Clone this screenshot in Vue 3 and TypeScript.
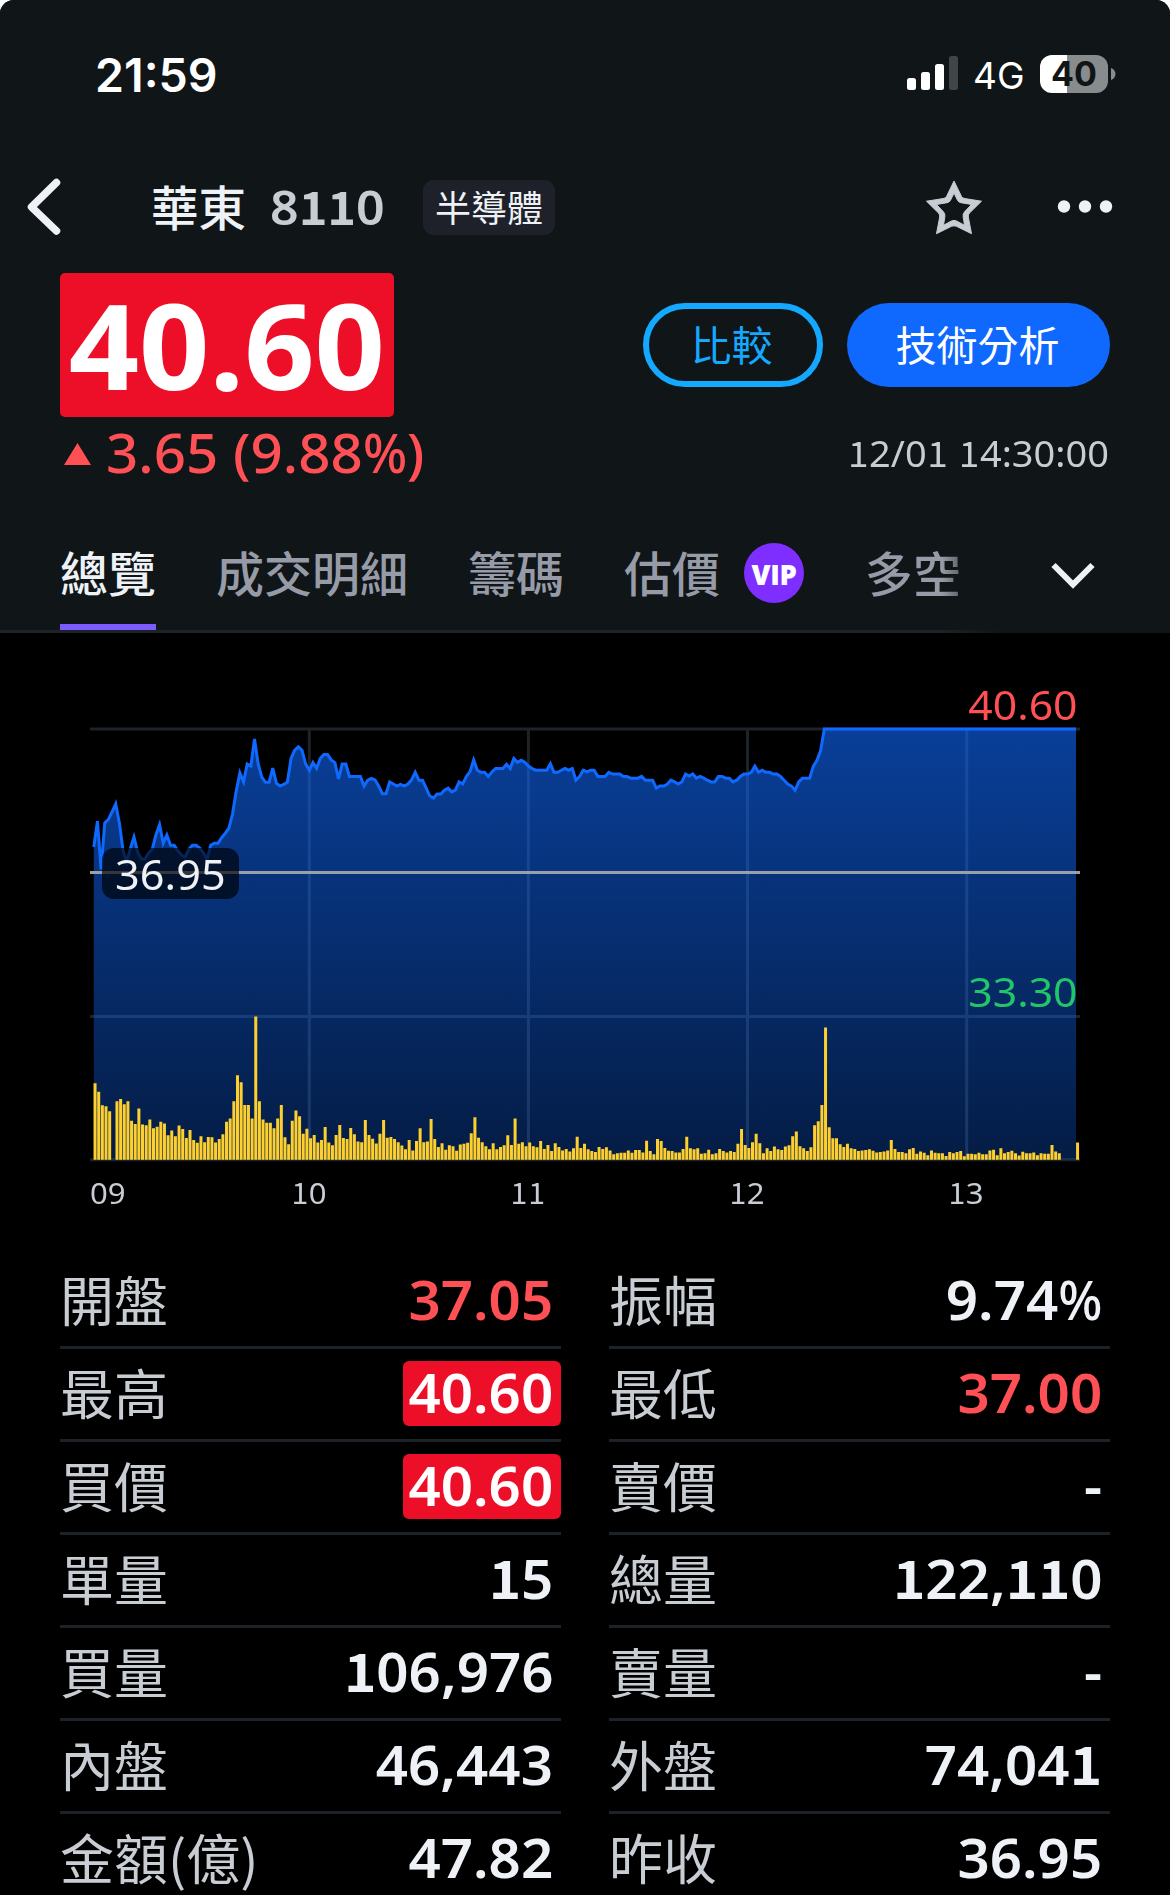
<script setup lang="ts">
import { h, type FunctionalComponent } from 'vue'

interface Quote {
  label: string
  value: string
  tone?: 'up' | 'limit'
}

// Figures use a footed "1", taken from the CJK family, and a narrow percent sign.
const special: Record<string, string> = { '1': 'one', '%': 'pct' }
const Num: FunctionalComponent<{ text: string }> = (props) =>
  h(
    'span',
    { class: 'num' },
    props.text
      .split(/([1%])/)
      .filter(Boolean)
      .map((part) => (special[part] ? h('span', { class: special[part] }, part) : part)),
  )
Num.props = ['text']

const left: Quote[] = [
  { label: '開盤', value: '37.05', tone: 'up' },
  { label: '最高', value: '40.60', tone: 'limit' },
  { label: '買價', value: '40.60', tone: 'limit' },
  { label: '單量', value: '15' },
  { label: '買量', value: '106,976' },
  { label: '內盤', value: '46,443' },
  { label: '金額(億)', value: '47.82' },
]
const right: Quote[] = [
  { label: '振幅', value: '9.74%' },
  { label: '最低', value: '37.00', tone: 'up' },
  { label: '賣價', value: '-' },
  { label: '總量', value: '122,110' },
  { label: '賣量', value: '-' },
  { label: '外盤', value: '74,041' },
  { label: '昨收', value: '36.95' },
]

// One sample per minute from 09:01, in chart units (UNIT per pixel) measured downwards.
const prices: number[] = [
  485, 410, 550, 415, 405, 383, 360, 415, 495, 528, 490, 456, 500, 520, 520, 502, 492, 450, 420, 474,
  450, 480, 480, 496, 508, 514, 492, 480, 480, 488, 502, 520, 480, 474, 474, 458, 445, 430, 388, 322,
  270, 296, 244, 250, 171, 244, 282, 297, 297, 256, 300, 308, 303, 297, 228, 204, 194, 204, 244, 262,
  240, 256, 228, 216, 216, 232, 240, 287, 244, 244, 280, 280, 280, 280, 308, 291, 286, 290, 308, 330,
  330, 296, 302, 308, 303, 308, 302, 290, 268, 291, 291, 314, 337, 343, 331, 331, 320, 314, 325, 320,
  296, 302, 280, 266, 232, 262, 268, 268, 280, 267, 257, 257, 257, 245, 257, 228, 239, 233, 239, 250,
  257, 262, 262, 262, 262, 243, 268, 268, 262, 257, 262, 257, 291, 280, 262, 267, 262, 262, 280, 280,
  280, 268, 273, 273, 273, 280, 280, 285, 285, 285, 280, 291, 291, 291, 314, 308, 308, 303, 291, 296,
  302, 296, 273, 279, 273, 285, 280, 285, 291, 296, 296, 280, 280, 285, 285, 296, 291, 280, 273, 273,
  268, 250, 268, 262, 268, 268, 273, 273, 280, 291, 302, 308, 320, 296, 285, 285, 285, 250, 233, 205,
  142,
]
const volumes: number[] = [
  1171, 1196, 1235, 1238, 1252, 1393, 1223, 1217, 1232, 1223, 1280, 1289, 1244, 1291, 1293, 1276, 1302, 1297, 1283, 1288,
  1322, 1308, 1325, 1294, 1304, 1330, 1307, 1336, 1344, 1325, 1342, 1327, 1328, 1343, 1333, 1319, 1283, 1273, 1223, 1148,
  1168, 1234, 1234, 1273, 977, 1223, 1276, 1286, 1286, 1302, 1273, 1234, 1328, 1348, 1280, 1250, 1267, 1318, 1303, 1331,
  1321, 1343, 1336, 1298, 1343, 1351, 1321, 1292, 1330, 1333, 1301, 1319, 1340, 1342, 1278, 1321, 1332, 1346, 1318, 1278,
  1329, 1327, 1333, 1342, 1352, 1363, 1336, 1366, 1339, 1302, 1342, 1340, 1275, 1333, 1356, 1345, 1364, 1351, 1354, 1367,
  1349, 1347, 1344, 1316, 1270, 1329, 1342, 1354, 1363, 1345, 1363, 1356, 1351, 1322, 1350, 1273, 1347, 1342, 1354, 1343,
  1354, 1357, 1339, 1362, 1350, 1368, 1345, 1356, 1366, 1362, 1369, 1360, 1326, 1359, 1347, 1363, 1368, 1371, 1356, 1362,
  1357, 1366, 1377, 1374, 1373, 1373, 1366, 1373, 1365, 1365, 1372, 1338, 1368, 1377, 1333, 1339, 1359, 1367, 1368, 1372,
  1372, 1362, 1326, 1360, 1363, 1360, 1376, 1374, 1364, 1377, 1374, 1362, 1368, 1372, 1368, 1371, 1347, 1304, 1350, 1359,
  1342, 1318, 1345, 1374, 1360, 1368, 1355, 1363, 1365, 1355, 1351, 1325, 1311, 1354, 1360, 1368, 1357, 1293, 1281, 1234,
  1009, 1299, 1331, 1331, 1348, 1356, 1347, 1360, 1362, 1368, 1366, 1365, 1363, 1367, 1372, 1371, 1369, 1366, 1336, 1362,
  1371, 1371, 1374, 1363, 1359, 1376, 1369, 1373, 1380, 1366, 1373, 1374, 1374, 1382, 1371, 1374, 1371, 1368, 1383, 1376,
  1376, 1377, 1373, 1377, 1377, 1366, 1364, 1380, 1360, 1374, 1371, 1367, 1374, 1381, 1370, 1374, 1374, 1372, 1380, 1374,
  1376, 1376, 1350, 1369, 1374, 1393, 1393, 1393, 1393, 1343,
]

const UNIT = 2.904
const STEP = 3.6525
const TOP = 95.9
const BASE = 526.7
const priceX = (i: number): string => (93.8 + i * STEP).toFixed(2)
const points = prices.map((p, i) => `${priceX(i)},${(p / UNIT + 47).toFixed(2)}`)
const linePath = `M${points.join('L')}L1076,${TOP}`
const areaPath = `${linePath}V${BASE}H93.8Z`
const barPath = volumes
  .map((v, i) => {
    const height = (1393 - v) / UNIT
    return height > 0 ? `M${(93.55 + i * STEP).toFixed(2)},${BASE}v${(-height).toFixed(2)}h3v${height.toFixed(2)}z` : ''
  })
  .join('')
const hours = [309.3, 528.4, 747.5, 966.7]
</script>

<template>
  <div class="screen">
    <header class="top">
      <div class="status">
        <span class="clock">21:59</span>
        <div class="status-right">
          <svg class="signal" width="52" height="36" viewBox="0 0 52 36">
            <rect x="0" y="22" width="9" height="12" rx="2.5" fill="#fff" />
            <rect x="14" y="16" width="9" height="18" rx="2.5" fill="#fff" />
            <rect x="28" y="8" width="9" height="26" rx="2.5" fill="#fff" />
            <rect x="42" y="0" width="9" height="34" rx="2.5" fill="#414548" />
          </svg>
          <span class="net">4G</span>
          <div class="battery"><span>40</span></div>
          <svg class="nub" width="5" height="12" viewBox="0 0 5 12"><path d="M0 0C3 1 4.500 3.500 4.500 6S3 11 0 12Z" fill="#888c8d" /></svg>
        </div>
      </div>

      <div class="nav">
        <svg class="back" width="40" height="64" viewBox="0 0 40 64">
          <path d="M32.500 7.500L7.500 32L32.500 56" fill="none" stroke="#eef2f6" stroke-width="7.500" stroke-linecap="round" stroke-linejoin="round" />
        </svg>
        <span class="name">華東</span>
        <span class="code"><Num text="8110" /></span>
        <span class="sector">半導體</span>
        <svg class="star" width="58" height="60" viewBox="925 177 58 60">
          <path fill-rule="evenodd" fill="#c8ccd3" stroke="#c8ccd3" stroke-width="1" stroke-linejoin="round" d="M954 181L961.500 196.500Q962.500 198.300 965 198.600L981.500 201.200L969.500 213Q968 214.700 968.300 217L971.500 233.700L956.500 226.300Q954 225.300 951.500 226.300L936.500 233.700L939.700 217Q940 214.700 938.500 213L926.500 201.200L943 198.600Q945.500 198.300 946.500 196.500ZM954 193L950.500 200.300Q949.500 202.300 947 202.700L936.500 204.500L943.200 211.500Q945.300 213.500 944.900 216.500L943.500 225.300L951 221.200Q954 219.500 957 221.200L964.500 225.300L963.100 216.500Q962.700 213.500 964.800 211.500L971.500 204.500L961 202.700Q958.500 202.300 957.500 200.300Z" />
        </svg>
        <svg class="more" width="56" height="14" viewBox="0 0 56 14">
          <circle v-for="x in [7, 28, 49]" :key="x" :cx="x" cy="6.500" r="6.200" fill="#eef2f6" />
        </svg>
      </div>

      <div class="summary">
        <div class="quote">
          <div class="price"><Num text="40.60" /></div>
          <div class="change">
            <svg width="27" height="22" viewBox="0 0 27 22"><path d="M13.500 0L27 22H0Z" fill="#ff5155" /></svg>
            <Num text="3.65 (9.88%)" />
          </div>
        </div>
        <div class="side">
          <div class="actions">
            <button class="btn compare">比較</button>
            <button class="btn analyse">技術分析</button>
          </div>
          <div class="time"><Num text="12/01 14:30:00" /></div>
        </div>
      </div>

      <nav class="tabs">
        <span class="tab active">總覽</span>
        <span class="tab">成交明細</span>
        <span class="tab">籌碼</span>
        <span class="tab">估價</span>
        <span class="vip">VIP</span>
        <span class="tab last">多空</span>
        <svg class="chevron" width="44" height="30" viewBox="0 0 44 30">
          <path d="M2.500 4L22 23.500L41.500 4" fill="none" stroke="#eef2f6" stroke-width="6" />
        </svg>
      </nav>
    </header>

    <section class="chart">
      <svg width="1170" height="540" viewBox="0 0 1170 540">
        <defs>
          <linearGradient id="area" x1="0" y1="96" x2="0" y2="527" gradientUnits="userSpaceOnUse">
            <stop offset="0" stop-color="#0f69ff" stop-opacity="0.600" />
            <stop offset="1" stop-color="#0f69ff" stop-opacity="0.270" />
          </linearGradient>
        </defs>
        <g stroke="#1d2328" stroke-width="3">
          <path d="M90 95.900H1080M90 383.400H1080M90 526.700H1080" />
          <path v-for="x in hours" :key="x" :d="`M${x} 96V527`" />
        </g>
        <path :d="areaPath" fill="url(#area)" />
        <path :d="linePath" fill="none" stroke="#0f69ff" stroke-width="3" />
        <path d="M90 239.500H1080" stroke="#9a9fa8" stroke-width="3" />
        <path :d="barPath" fill="#fdd02f" />
      </svg>
      <span class="level high"><Num text="40.60" /></span>
      <span class="level low"><Num text="33.30" /></span>
      <span class="ref"><Num text="36.95" /></span>
      <div class="axis">
        <span v-for="t in ['09', '10', '11', '12', '13']" :key="t"><Num :text="t" /></span>
      </div>
    </section>

    <section class="table">
      <div v-for="(col, c) in [left, right]" :key="c" class="col">
        <div v-for="q in col" :key="q.label" class="row">
          <span class="label">{{ q.label }}</span>
          <span class="value" :class="q.tone"><Num :text="q.value" /></span>
        </div>
      </div>
    </section>
  </div>
</template>

<style>
body {
  background: #fff;
}
.num {
  display: inline-block;
  font-family: 'Noto Sans', 'Open Sans', sans-serif;
  white-space: pre;
  transform: scaleX(1.055);
  transform-origin: left;
}
.num .one {
  display: inline-block;
  width: 0.586em;
  font-family: 'Noto Sans CJK TC', sans-serif;
  font-size: 0.975em;
  line-height: 1;
  text-align: center;
}
.num .pct {
  display: inline-block;
  margin-left: -0.07em;
  font-weight: 500;
  transform: scaleX(0.92);
  transform-origin: right;
}
</style>

<style scoped>
.screen {
  width: 1170px;
  height: 1895px;
  overflow: hidden;
  background: #000;
  border-radius: 14px 14px 0 0;
  color: #eef2f6;
  font-family: 'Noto Sans CJK TC', sans-serif;
}
.top {
  height: 633px;
  background: #101518;
}
.status {
  height: 149px;
  box-sizing: border-box;
  padding: 0 54px 1px 95px;
  display: flex;
  justify-content: space-between;
  align-items: center;
  font-family: Inter, sans-serif;
  color: #fff;
}
.clock {
  margin-top: 2px;
  font-size: 46.500px;
  font-weight: 600;
}
.status-right {
  display: flex;
  align-items: center;
}
.net {
  margin: 2px 0 0 14px;
  width: 67px;
  font-size: 37px;
}
.battery {
  width: 68px;
  height: 38px;
  border-radius: 12px;
  background: linear-gradient(90deg, #fff 27px, #888c8d 27px);
  color: #101518;
  font-size: 34px;
  font-weight: 700;
  line-height: 38px;
  text-align: center;
}
.nub {
  margin-left: 3px;
}
.nav {
  height: 116px;
  display: flex;
  align-items: center;
  padding-left: 24px;
  margin-bottom: 8px;
}
.name {
  margin: 0 0 4px 87px;
  width: 96px;
  font-size: 47.500px;
  font-weight: 500;
}
.code {
  margin: 0 0 5px 23px;
  width: 155px;
  font-size: 47.500px;
  font-weight: 600;
  color: #c8ccd3;
}
.sector {
  width: 132px;
  height: 55px;
  margin-left: -2px;
  border-radius: 11px;
  background: #1e2129;
  font-size: 36px;
  line-height: 53px;
  text-align: center;
}
.star {
  margin-left: 370px;
}
.more {
  margin-left: 74px;
}
.summary {
  height: 250px;
  display: flex;
  justify-content: space-between;
  padding: 0 60px;
}
.price {
  width: 334px;
  height: 144px;
  border-radius: 5px;
  background: #ed0f28;
  color: #fff;
  font-size: 119px;
  font-weight: 700;
  line-height: 130px;
  text-align: center;
}
.price .num {
  transform: scaleX(1.035);
  transform-origin: center;
}
.change {
  height: 74px;
  box-sizing: border-box;
  display: flex;
  align-items: center;
  padding: 0 0 3px 4px;
  gap: 15px;
  color: #ff5155;
  font-size: 53.500px;
  font-weight: 550;
}
.change svg {
  margin-top: 2px;
}
.side {
  display: flex;
  flex-direction: column;
  align-items: flex-end;
}
.actions {
  display: flex;
  gap: 24px;
  padding-top: 30px;
}
.btn {
  height: 84px;
  box-sizing: border-box;
  border: 0;
  border-radius: 42px;
  padding: 0 0 5px;
  font: 400 41px 'Noto Sans CJK TC', sans-serif;
  text-align: center;
}
.compare {
  width: 180px;
  padding-right: 3px;
  border: 6px solid #14a9ff;
  background: none;
  color: #14a9ff;
}
.analyse {
  width: 263px;
  padding-right: 2px;
  background: #0f69ff;
  color: #fff;
}
.time {
  margin-top: 38px;
  padding-right: 1px;
  font-size: 36px;
  color: #c8ccd3;
}
.time .num,
.level .num,
.value .num {
  transform-origin: right;
}
.tabs {
  height: 107px;
  box-sizing: content-box;
  border-bottom: 3px solid;
  border-image: linear-gradient(90deg, #1d2328 940px, #101518 1000px) 1;
  display: flex;
  align-items: center;
  padding-left: 60px;
}
.tab {
  height: 107px;
  box-sizing: border-box;
  margin-right: 60px;
  font-size: 48px;
  font-weight: 500;
  line-height: 96px;
  color: #979ba7;
}
.active {
  color: #eef2f6;
  border-bottom: 6px solid #7b5cff;
}
.vip {
  width: 60px;
  height: 60px;
  margin: 0 61px 8px -36px;
  border-radius: 50%;
  background: #7e2eff;
  color: #fff;
  font: 800 27.500px/63px 'Open Sans', sans-serif;
  letter-spacing: -0.300px;
  text-align: center;
}
.last {
  margin-right: 90px;
  background: linear-gradient(90deg, #979ba7 80%, #5d6169);
  background-clip: text;
  color: transparent;
}
.chevron {
  margin-bottom: 2px;
}
.chart {
  position: relative;
  height: 623px;
}
.chart svg {
  display: block;
}
.level {
  position: absolute;
  right: 92px;
  font-size: 40.500px;
  line-height: 50px;
}
.high {
  top: 45px;
  color: #ff5155;
}
.low {
  top: 332px;
  color: #21c668;
}
.ref {
  position: absolute;
  left: 102px;
  top: 215px;
  width: 137px;
  height: 51px;
  border-radius: 12px;
  background: rgba(0, 0, 0, 0.65);
  font-size: 41px;
  line-height: 48px;
  text-align: center;
}
.ref .num {
  transform-origin: center;
}
.axis {
  display: flex;
  padding-left: 90px;
  font-size: 29.500px;
  line-height: 37px;
}
.axis span {
  color: #c8ccd3;
}
.axis > span {
  width: 219px;
}
.axis > span:first-child {
  width: 201px;
}
.table {
  display: flex;
  gap: 48px;
  padding: 0 60px;
}
.col {
  flex: 1;
}
.row {
  height: 93px;
  box-sizing: border-box;
  border-bottom: 3px solid #1d2228;
  display: flex;
  align-items: center;
  justify-content: space-between;
}
.label {
  margin-bottom: 5px;
  font-size: 54px;
  line-height: 84px;
  color: #c8ccd3;
}
.value {
  height: 65px;
  margin-bottom: 1px;
  padding: 0 8px 0 13px;
  border-radius: 6px;
  font-size: 53.500px;
  font-weight: 580;
  line-height: 58px;
}
.up {
  color: #ff5155;
}
.limit {
  background: #ed0f28;
  color: #fff;
}
</style>
